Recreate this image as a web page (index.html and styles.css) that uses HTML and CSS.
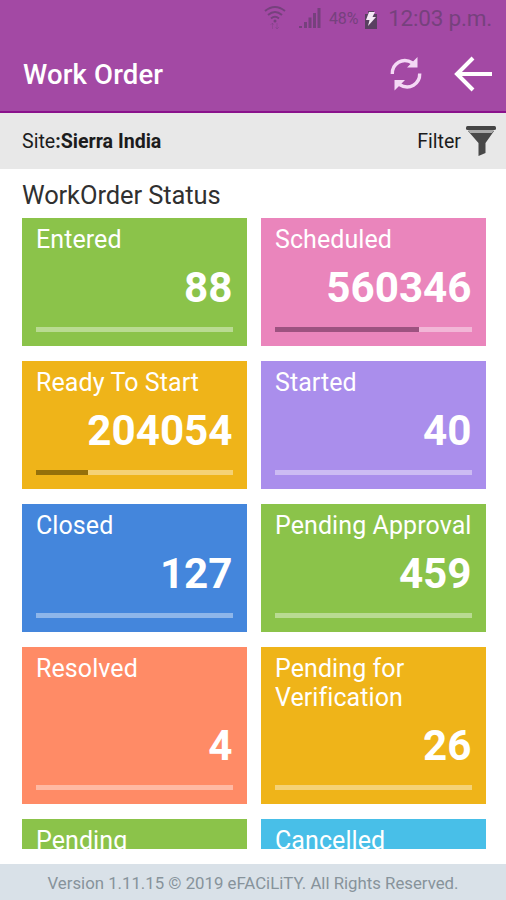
FILE: index.html
```html
<!DOCTYPE html>
<html lang="en">
<head>
<meta charset="utf-8">
<title>Work Order</title>
<link rel="stylesheet" href="styles.css">
</head>
<body>
<div class="screen">
  <header class="header">
    <div class="status">
      <svg class="wifi" width="24" height="26" viewBox="0 0 24 26" fill="none" stroke="currentColor" stroke-width="2"><path d="M2 7Q12-1 22 7M5 11Q12 5 19 11M8 14.500Q12 11 16 14.500"/><circle cx="12" cy="17" r="1.500" fill="currentColor" stroke="none"/><path d="M9.500 19v6M7.500 21l2-2 1 2M14 19v6M12.500 23l1.500 2 2-2" stroke-width="1" opacity=".4"/></svg>
      <svg class="signal" width="22" height="22" viewBox="0 0 22 22" fill="currentColor"><path d="M0 19h3v2H0zM5 15h3v6H5zM9.500 10.500h3V21h-3zM14 6h3v15h-3zM18.500 1h3v20h-3z"/></svg>
      <span class="percent">48%</span>
      <svg class="battery" width="14" height="18" viewBox="0 0 14 18"><path d="M1 3h3V0h6v3h3v15H1z" fill="#594060"/><path d="M5 1h6L8.500 6H12L4 15l1.500-6H2z" fill="#f4e9f5"/></svg>
      <span class="clock">12:03 p.m.</span>
    </div>
    <div class="toolbar">
      <h1 class="title">Work Order</h1>
      <svg class="refresh" width="34" height="36" viewBox="0 0 34 36"><path d="M3.300 18C3 8 13.500 .5 23.500 7M30.700 17.500C31 27.500 20.500 35 10.500 28.500" fill="none" stroke="#f4d8f5" stroke-width="3.400"/><path d="M28.500 1v10.500H18zM5.500 34.500V24H16z" fill="#f4d8f5"/></svg>
      <svg class="back" width="40" height="36" viewBox="0 0 40 36" fill="none" stroke="#fff" stroke-width="4"><path d="M39 18H4M20 2L4 18l16 16"/></svg>
    </div>
  </header>
  <div class="sitebar">
    <span class="site">Site<b>:Sierra India</b></span>
    <span class="filter">Filter</span>
    <svg class="funnel" width="30" height="31" viewBox="0 0 30 31"><path d="M2 5h26L19.500 17v10l-7 3V17z" fill="#484848"/><path d="M2 4h26l-2 3H4z" fill="#aaa"/><rect width="30" height="4" rx="1.500" fill="#454545"/></svg>
  </div>
  <main class="content">
    <h2 class="heading">WorkOrder Status</h2>
    <div class="grid">
      <section class="card green"><h3>Entered</h3><p>88</p><div class="bar"></div></section>
      <section class="card pink"><h3>Scheduled</h3><p>560346</p><div class="bar"><i style="width:73.300%"></i></div></section>
      <section class="card amber"><h3>Ready To Start</h3><p>204054</p><div class="bar"><i style="width:26.700%"></i></div></section>
      <section class="card violet"><h3>Started</h3><p>40</p><div class="bar"></div></section>
      <section class="card blue"><h3>Closed</h3><p>127</p><div class="bar"></div></section>
      <section class="card green"><h3>Pending Approval</h3><p>459</p><div class="bar"></div></section>
      <section class="card coral"><h3>Resolved</h3><p>4</p><div class="bar"></div></section>
      <section class="card amber"><h3>Pending for<br>Verification</h3><p>26</p><div class="bar"></div></section>
      <section class="card green"><h3>Pending</h3></section>
      <section class="card cyan"><h3>Cancelled</h3></section>
    </div>
  </main>
  <footer class="footer">Version 1.11.15 © 2019 eFACiLiTY. All Rights Reserved.</footer>
</div>
</body>
</html>
```
FILE: styles.css
```css
* { box-sizing: border-box; }
body, h1, h2, h3, p { margin: 0; }
body { font-family: Roboto, "Liberation Sans", sans-serif; background: #fff; }
svg { display: block; flex: none; }
.screen { width: 506px; height: 900px; display: flex; flex-direction: column; overflow: hidden; }

.header { height: 113px; flex: none; background: #a349a4; border-bottom: 2px solid #8a128c; }
.status { height: 36px; display: flex; align-items: center; justify-content: flex-end; padding-right: 14px; color: #76417d; white-space: nowrap; }
.wifi { margin: -2px 12px 0 0; }
.signal { margin-right: 8px; }
.percent { font-size: 16px; letter-spacing: -.2px; margin-right: 6px; }
.battery { margin: 3px 10px 0 0; }
.clock { font-size: 22.500px; letter-spacing: -.2px; }
.toolbar { height: 75px; display: flex; align-items: center; padding: 0 13px 0 23px; }
.title { flex: 1; padding-top: 2px; font-size: 27.500px; font-weight: 500; line-height: 32px; letter-spacing: .15px; color: #fff; }
.refresh { margin-right: 30px; }

.sitebar { height: 56px; flex: none; display: flex; align-items: center; padding: 0 10px 0 22px; background: #e8e8e8; color: #1c1c1c; font-size: 19.600px; }
.site { flex: 1; }
.filter { margin-right: 5px; }

.content { height: 680px; flex: none; padding: 10px 20px 0 22px; overflow: hidden; }
.heading { height: 38.500px; padding-top: 1px; font-size: 25.500px; font-weight: 400; line-height: 31px; letter-spacing: -.1px; color: #303030; }
.grid { display: grid; grid-template-columns: 224.500px 224.500px; gap: 14.500px; }
.card { min-height: 128.500px; display: flex; flex-direction: column; padding: 7.500px 14px 14px; color: #fff; }
.card h3 { font-size: 25px; font-weight: 400; line-height: 29.300px; letter-spacing: .08px; white-space: nowrap; }
.card p { margin: auto 0 15px; padding-top: 8.500px; font-size: 42.200px; font-weight: 700; line-height: 49px; text-align: right; }
.bar { height: 5px; background: rgba(255, 255, 255, .4); }
.bar i { display: block; height: 100%; background: var(--fill); }
.green { background: #8bc34a; }
.pink { background: #ea85bc; --fill: #9d5280; }
.amber { background: #efb419; --fill: #95700a; }
.violet { background: #aa8eec; }
.blue { background: #4486dc; }
.coral { background: #ff8b66; }
.cyan { background: #48bfe8; }

.footer { margin-top: 15px; height: 36px; flex: none; background: #d9e1e8; color: #87939b; font-size: 16.800px; line-height: 38px; text-align: center; white-space: nowrap; }
```
